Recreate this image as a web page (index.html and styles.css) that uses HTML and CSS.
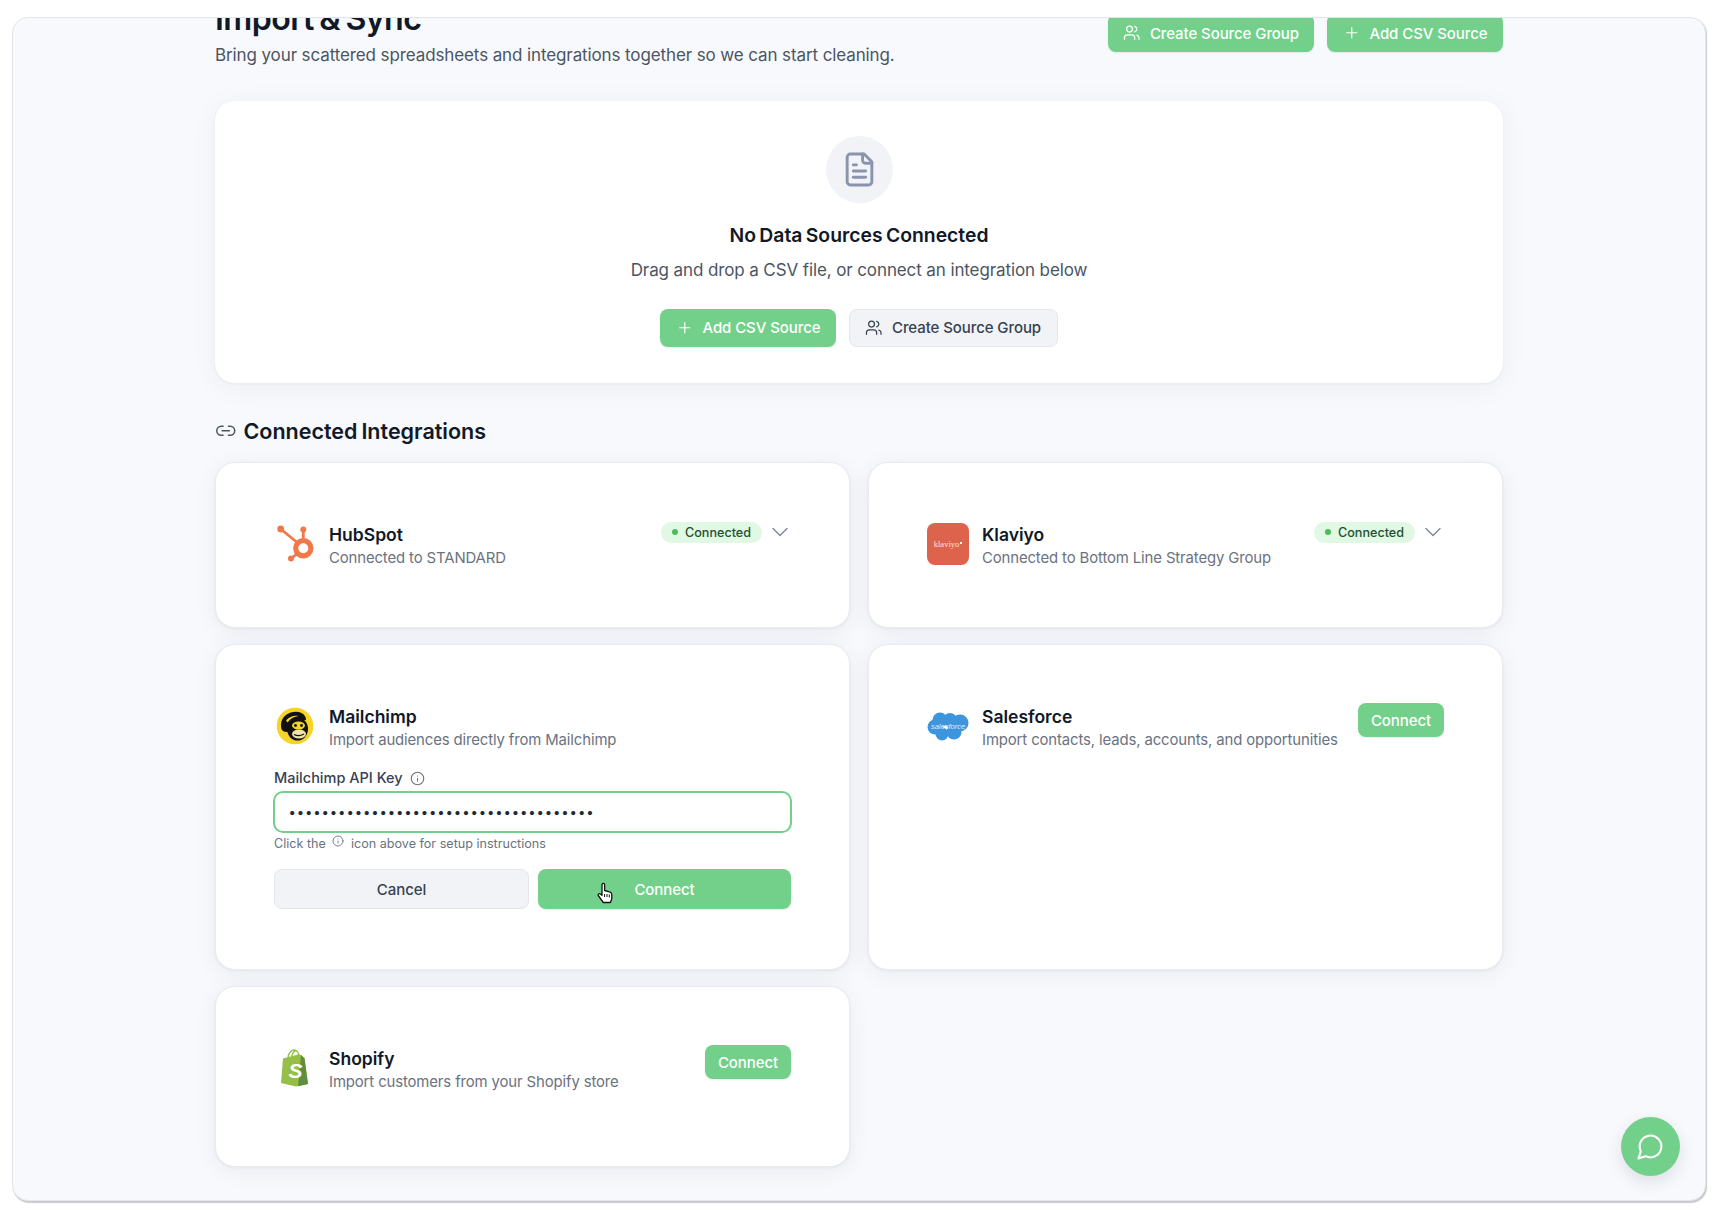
FILE: index.html
```html
<!DOCTYPE html>
<html lang="en">
<head>
<meta charset="utf-8">
<title>Import &amp; Sync</title>
<link rel="stylesheet" href="styles.css">
</head>
<body>
<div class="window">
  <main class="column">
    <header class="page-head">
      <div>
        <h1 class="page-title">Import &amp; Sync</h1>
        <p class="page-sub">Bring your scattered spreadsheets and integrations together so we can start cleaning.</p>
      </div>
      <div class="head-actions">
        <button class="btn btn-green"><svg class="ico" viewBox="0 0 24 24"><path d="M16 21v-2a4 4 0 0 0-4-4H6a4 4 0 0 0-4 4v2"/><circle cx="9" cy="7" r="4"/><path d="M22 21v-2a4 4 0 0 0-3-3.87"/><path d="M16 3.13a4 4 0 0 1 0 7.75"/></svg>Create Source Group</button>
        <button class="btn btn-green"><svg class="ico" viewBox="0 0 24 24"><path d="M5 12h14"/><path d="M12 5v14"/></svg>Add CSV Source</button>
      </div>
    </header>

    <section class="empty-card">
      <div class="empty-circle"><svg class="file-ico" viewBox="0 0 24 24"><path d="M15 2H6a2 2 0 0 0-2 2v16a2 2 0 0 0 2 2h12a2 2 0 0 0 2-2V7Z"/><path d="M14 2v4a2 2 0 0 0 2 2h4"/><path d="M10 9H8"/><path d="M16 13H8"/><path d="M16 17H8"/></svg></div>
      <h2 class="empty-title">No Data Sources Connected</h2>
      <p class="empty-sub">Drag and drop a CSV file, or connect an integration below</p>
      <div class="empty-actions">
        <button class="btn btn-green"><svg class="ico" viewBox="0 0 24 24"><path d="M5 12h14"/><path d="M12 5v14"/></svg>Add CSV Source</button>
        <button class="btn btn-soft"><svg class="ico" viewBox="0 0 24 24"><path d="M16 21v-2a4 4 0 0 0-4-4H6a4 4 0 0 0-4 4v2"/><circle cx="9" cy="7" r="4"/><path d="M22 21v-2a4 4 0 0 0-3-3.87"/><path d="M16 3.13a4 4 0 0 1 0 7.75"/></svg>Create Source Group</button>
      </div>
    </section>

    <h2 class="section-title"><svg class="link-ico" viewBox="0 0 24 24"><path d="M9 17H7A5 5 0 0 1 7 7h2"/><path d="M15 7h2a5 5 0 1 1 0 10h-2"/><path d="M8 12h8"/></svg>Connected Integrations</h2>

    <div class="grid">
      <article class="card">
        <div class="card-row">
          <div class="brand">
            <svg class="logo" viewBox="-1 0 42 42"><g fill="#f0784a"><circle cx="28.3" cy="25.3" r="10.2"/><circle cx="5.7" cy="6" r="3.4"/><circle cx="28.3" cy="6.5" r="3"/><circle cx="16" cy="35.5" r="3"/></g><g stroke="#f0784a" stroke-width="2.8" fill="none"><path d="M5.7 6 24 21"/><path d="M28.3 6.5v12"/><path d="M16 35.5 23 30"/></g><circle cx="28.3" cy="25.3" r="5" fill="#fff"/></svg>
            <div class="brand-text"><div class="brand-name">HubSpot</div><div class="brand-desc">Connected to STANDARD</div></div>
          </div>
          <div class="status"><span class="badge"><i class="dot"></i>Connected</span><svg class="chev" viewBox="0 0 22 22"><path d="M4 7.5 11 14.5 18 7.5"/></svg></div>
        </div>
      </article>

      <article class="card">
        <div class="card-row">
          <div class="brand">
            <div class="logo klaviyo">klaviyo<i></i></div>
            <div class="brand-text"><div class="brand-name">Klaviyo</div><div class="brand-desc">Connected to Bottom Line Strategy Group</div></div>
          </div>
          <div class="status"><span class="badge"><i class="dot"></i>Connected</span><svg class="chev" viewBox="0 0 22 22"><path d="M4 7.5 11 14.5 18 7.5"/></svg></div>
        </div>
      </article>

      <article class="card">
        <div class="card-row">
          <div class="brand">
            <svg class="logo" viewBox="-1 0 42 42"><circle cx="20" cy="21" r="18.3" fill="#f5d327"/><path d="M6.500 24c-1.500-6 .5-12 6-15 4.500-2.500 10-3 14-1 3 1.500 4.500 4 4.500 7l-7 .5c-5 1-9 3-11 7l1 4c-3 1-6.500 0-7.500-2.500Z" fill="#111"/><path d="M11 15.500c3-3.500 8-5.500 12.500-4.500-4.500.5-8.500 2.800-11 6.500Z" fill="#f5d327"/><ellipse cx="22.500" cy="24" rx="10.500" ry="11.500" fill="#111"/><ellipse cx="23.500" cy="20.500" rx="6.500" ry="4" fill="#f5d327"/><ellipse cx="24" cy="29" rx="7" ry="4.500" fill="#efe3a8"/><path d="M19 29.500c3 1.500 6.500 1.500 10-.5" stroke="#111" stroke-width="1.200" fill="none"/><circle cx="20.500" cy="20.500" r="1.400" fill="#111"/><circle cx="26.500" cy="20.500" r="1.400" fill="#111"/></svg>
            <div class="brand-text"><div class="brand-name">Mailchimp</div><div class="brand-desc">Import audiences directly from Mailchimp</div></div>
          </div>
        </div>
        <div class="field-label">Mailchimp API Key <svg class="info" viewBox="0 0 24 24"><circle cx="12" cy="12" r="10"/><path d="M12 16v-4"/><path d="M12 8h.01"/></svg></div>
        <input class="key-input" type="password" value="0123456789012345678901234567890123456" aria-label="Mailchimp API Key">
        <p class="help">Click the <svg class="info-sm" viewBox="0 0 24 24"><circle cx="12" cy="12" r="10"/><path d="M12 16v-4"/><path d="M12 8h.01"/></svg> icon above for setup instructions</p>
        <div class="form-actions">
          <button class="btn btn-soft btn-wide">Cancel</button>
          <button class="btn btn-green btn-wide btn-cursor">Connect<svg class="cursor" viewBox="0 0 16 22"><path d="M5 10V2.800c0-1.800 2.600-1.800 2.600 0V8.500l5 1.300c1.500.4 2.200 1.400 2.200 2.800v3.400c0 2-.8 3-1.500 4.500H6.300L1.600 14c-1.200-1.400.4-3 1.800-2L5 13.300Z" fill="#fff" stroke="#111" stroke-width="1.300" stroke-linejoin="round"/><path d="M7.600 12v3M10 12v3M12.300 12.500v3" stroke="#111" stroke-width="1"/></svg></button>
        </div>
      </article>

      <article class="card">
        <div class="card-row">
          <div class="brand">
            <div class="logo cloud"><svg viewBox="0 0 42 32"><g fill="#3d95dd"><circle cx="13" cy="10" r="7.500"/><circle cx="23" cy="10" r="7"/><circle cx="33" cy="13" r="8.500"/><circle cx="8" cy="17" r="7.500"/><circle cx="15" cy="24" r="6.500"/><circle cx="27" cy="22" r="7.500"/></g><text x="21" y="18.500" text-anchor="middle" class="cloud-text">salesforce</text></svg></div>
            <div class="brand-text"><div class="brand-name">Salesforce</div><div class="brand-desc">Import contacts, leads, accounts, and opportunities</div></div>
          </div>
          <button class="btn btn-green btn-small">Connect</button>
        </div>
      </article>

      <article class="card card-tall">
        <div class="card-row">
          <div class="brand">
            <svg class="logo" viewBox="0 0 42 42"><path d="M9 11.500 24 7.500l3 .5 3.500 3 3.500 26-12 2.500L7 36Z" fill="#95bf47"/><path d="M27 8l3.500 3.500 3.500 25.500-10 2.200Z" fill="#5e8e3e"/><path d="M14 11c0-4 3-8 6-8s5 3 5 6M18 10c0-3 1.500-6 3.500-6" stroke="#95bf47" stroke-width="1.300" fill="none"/><text x="14.500" y="31" class="bag-s">S</text></svg>
            <div class="brand-text"><div class="brand-name">Shopify</div><div class="brand-desc">Import customers from your Shopify store</div></div>
          </div>
          <button class="btn btn-green btn-small">Connect</button>
        </div>
      </article>
    </div>
  </main>
  <button class="chat" aria-label="Chat"><svg viewBox="0 0 24 24"><path d="M7.900 20A9 9 0 1 0 4 16.100L2 22Z"/></svg></button>
</div>
</body>
</html>
```
FILE: styles.css
```css
* { box-sizing: border-box; }
html, body { margin: 0; height: 100%; }
body {
  background: #fff;
  font-family: Inter, "Liberation Sans", sans-serif;
  color: #111827;
  padding: 17px 14px 16px 12px;
  overflow: hidden;
}
.window {
  position: relative;
  height: 1184px;
  background: #f8f9fc;
  border: 1.5px solid #e3e5e9;
  border-radius: 16px;
  overflow: hidden;
  box-shadow: 1px 1.500px 1px #c9cbcf;
}
.column {
  width: 1288px;
  margin: -19px auto 0;
}
.page-head {
  display: flex;
  justify-content: space-between;
  align-items: flex-start;
  margin-bottom: 32.5px;
}
.page-title {
  margin: 0 0 2.5px;
  font-size: 32.2px;
  line-height: 40px;
  font-weight: 600;
  letter-spacing: -0.6px;
  word-spacing: -2px;
  color: #111827;
}
.page-sub {
  margin: 0;
  font-size: 17px;
  line-height: 27px;
  letter-spacing: -0.11px;
  color: #4b5563;
}
.head-actions { display: flex; gap: 13px; margin-top: 15px; }
.btn {
  display: inline-flex;
  align-items: center;
  justify-content: center;
  gap: 9px;
  height: 38px;
  padding: 0 15.5px;
  border: 0;
  border-radius: 8px;
  font-family: inherit;
  font-size: 15px;
  letter-spacing: -0.08px;
  font-weight: 500;
}
.btn-green {
  background: #72d08a;
  color: #fff;
  box-shadow: 0 1px 2px rgba(15, 23, 42, 0.08);
}
.btn-soft {
  background: #f1f3f6;
  color: #374151;
  border: 1px solid #e3e6eb;
}
.ico {
  width: 17.5px;
  height: 17.5px;
  fill: none;
  stroke: currentColor;
  stroke-width: 1.7;
  stroke-linecap: round;
  stroke-linejoin: round;
  flex: none;
}
.empty-card {
  display: flex;
  flex-direction: column;
  align-items: center;
  height: 282px;
  padding-top: 35px;
  background: #fff;
  border-radius: 20px;
  box-shadow: 0 4px 28px rgba(30, 41, 80, 0.05), 0 1px 3px rgba(30, 41, 80, 0.05);
}
.empty-circle {
  width: 67px;
  height: 67px;
  border-radius: 50%;
  background: #f1f3f7;
  display: flex;
  align-items: center;
  justify-content: center;
}
.file-ico {
  width: 37px;
  height: 37px;
  fill: none;
  stroke: #8a94ad;
  stroke-width: 1.9;
  stroke-linecap: round;
  stroke-linejoin: round;
}
.empty-title {
  margin: 18px 0 0;
  font-size: 19.35px;
  line-height: 28px;
  font-weight: 600;
  word-spacing: -1.5px;
  color: #111827;
}
.empty-sub {
  margin: 8px 0 0;
  font-size: 17px;
  line-height: 27px;
  letter-spacing: -0.11px;
  color: #4b5563;
}
.empty-actions { display: flex; gap: 13px; margin-top: 24.5px; }
.section-title {
  display: flex;
  align-items: center;
  gap: 7px;
  margin: 33px 0 16px;
  font-size: 21.5px;
  line-height: 30px;
  font-weight: 600;
  word-spacing: -1.500px;
  color: #111827;
}
.link-ico {
  width: 21.500px;
  height: 21.500px;
  fill: none;
  stroke: #4b5563;
  stroke-width: 1.7;
  stroke-linecap: round;
  stroke-linejoin: round;
}
.grid {
  display: grid;
  grid-template-columns: 1fr 1fr;
  gap: 16.5px 18px;
}
.card {
  background: #fff;
  border: 1px solid #e9ebf0;
  border-radius: 20px;
  padding: 58px 58px 59.5px;
  box-shadow: 0 4px 24px rgba(30, 41, 80, 0.06), 0 1px 3px rgba(30, 41, 80, 0.06);
}
.card-tall { padding-bottom: 75px; }
.card-row {
  display: flex;
  justify-content: space-between;
  align-items: flex-start;
  gap: 12px;
}
.brand { display: flex; align-items: center; gap: 13px; height: 46px; }
.brand-text { margin-top: 3.4px; }
.logo { width: 42px; height: 42px; flex: none; }
.brand-name {
  font-size: 17.55px;
  line-height: 24px;
  font-weight: 600;
  color: #111827;
}
.brand-desc {
  font-size: 14.9px;
  line-height: 22px;
  letter-spacing: -0.12px;
  white-space: nowrap;
  color: #6b7280;
}
.klaviyo {
  background: #dd634d;
  border-radius: 8px;
  color: #fbe3dd;
  font-family: "Liberation Serif", serif;
  font-size: 8.500px;
  display: flex;
  align-items: center;
  justify-content: center;
}
.klaviyo i { width: 2px; height: 2px; margin: -3px 0 0 1px; background: #fff; }
.cloud { display: flex; align-items: center; }
.cloud svg { width: 42px; height: 32px; }
.cloud-text {
  fill: #dcefff;
  font-family: "Liberation Sans", sans-serif;
  font-style: italic;
  font-size: 7.500px;
}
.bag-s {
  fill: #fff;
  font-family: "Liberation Sans", sans-serif;
  font-weight: 700;
  font-style: italic;
  font-size: 21px;
}
.status { display: flex; align-items: center; gap: 7px; }
.badge {
  display: inline-flex;
  align-items: center;
  gap: 7px;
  height: 21px;
  padding: 0 11px;
  border-radius: 11px;
  background: #e0f8e4;
  color: #1f5130;
  font-size: 12.6px;
  font-weight: 500;
}
.dot { width: 6px; height: 6px; border-radius: 50%; background: #4cbc5a; }
.chev {
  width: 22px;
  height: 22px;
  fill: none;
  stroke: #7b86a0;
  stroke-width: 1.4;
  stroke-linecap: round;
  stroke-linejoin: round;
}
.field-label {
  display: flex;
  align-items: center;
  gap: 7px;
  margin-top: 18px;
  font-size: 14.5px;
  line-height: 22px;
  font-weight: 500;
  color: #374151;
}
.info, .info-sm {
  fill: none;
  stroke: #6b7280;
  stroke-width: 1.8;
  stroke-linecap: round;
  stroke-linejoin: round;
}
.info { width: 15px; height: 15px; }
.info-sm { width: 12px; height: 12px; margin: 0 3px; vertical-align: 1px; }
.key-input {
  display: block;
  width: calc(100% + 2px);
  height: 42px;
  margin: 2px -1px 0;
  padding: 0 13.5px;
  border: 2px solid #72d08a;
  border-radius: 10px;
  background: #fff;
  color: #1f2937;
  font-family: inherit;
  font-size: 13.2px;
  letter-spacing: 0.85px;
  outline: none;
}
.help {
  margin: 2px 0 0;
  font-size: 12.6px;
  line-height: 18px;
  color: #6b7280;
}
.form-actions { display: flex; gap: 9px; margin-top: 16px; }
.btn-wide { flex: 1; height: 40px; }
.btn-cursor { position: relative; }
.cursor {
  position: absolute;
  left: 59px;
  top: 13px;
  width: 16px;
  height: 22px;
}
.btn-small { height: 34px; padding: 0 13px; flex: none; }
.chat {
  position: absolute;
  right: 25px;
  bottom: 24px;
  width: 59px;
  height: 59px;
  border: 0;
  border-radius: 50%;
  background: #72d08a;
  display: flex;
  align-items: center;
  justify-content: center;
  box-shadow: 0 6px 16px rgba(30, 41, 80, 0.12);
}
.chat svg {
  width: 29px;
  height: 29px;
  fill: none;
  stroke: #fff;
  stroke-width: 1.7;
  stroke-linecap: round;
  stroke-linejoin: round;
}
```
